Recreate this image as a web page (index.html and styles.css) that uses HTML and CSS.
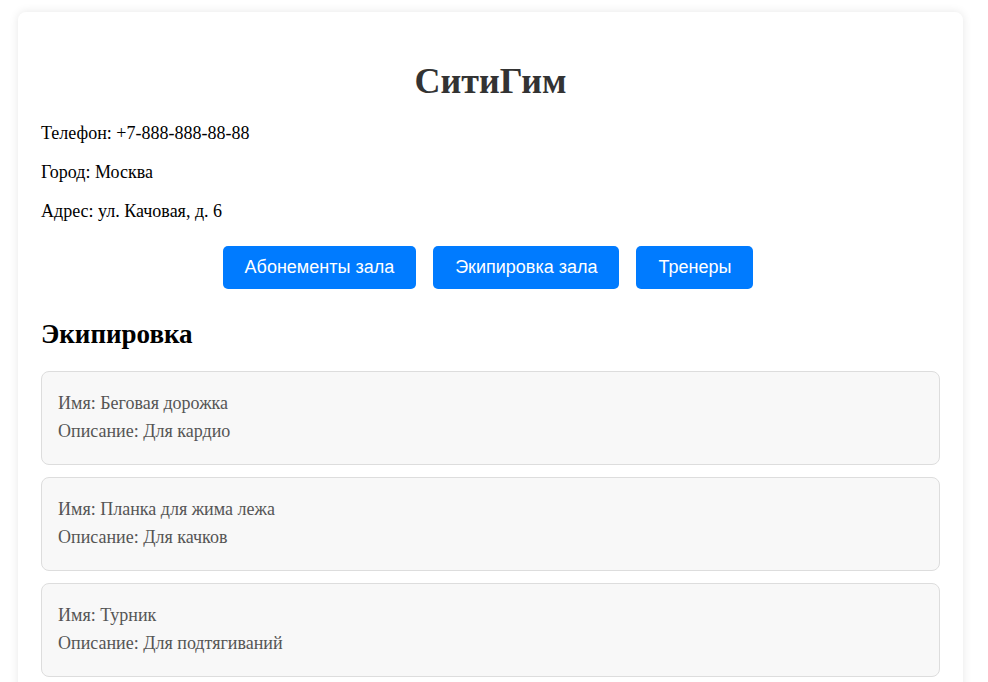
FILE: index.html
```html
<!DOCTYPE html>
<html lang="ru">
<head>
<meta charset="utf-8">
<title>СитиГим</title>
<link rel="stylesheet" href="styles.css">
</head>
<body>
<div class="card">
  <h1 class="title">СитиГим</h1>
  <p class="info">Телефон: +7-888-888-88-88</p>
  <p class="info">Город: Москва</p>
  <p class="info">Адрес: ул. Качовая, д. 6</p>
  <div class="nav">
    <button class="btn">Абонементы зала</button>
    <button class="btn">Экипировка зала</button>
    <button class="btn">Тренеры</button>
  </div>
  <h2 class="section">Экипировка</h2>
  <div class="list">
    <div class="item">
      <div class="line">Имя: Беговая дорожка</div>
      <div class="line">Описание: Для кардио</div>
    </div>
    <div class="item">
      <div class="line">Имя: Планка для жима лежа</div>
      <div class="line">Описание: Для качков</div>
    </div>
    <div class="item">
      <div class="line">Имя: Турник</div>
      <div class="line">Описание: Для подтягиваний</div>
    </div>
  </div>
</div>
</body>
</html>
```
FILE: styles.css
```css
html, body {
  margin: 0;
  padding: 0;
  background: #ffffff;
}
body {
  font-family: "Liberation Serif", "Times New Roman", serif;
  font-size: 18px;
  color: #000;
  padding: 12px 0 20px 18px;
}
.card {
  width: 945px;
  box-sizing: border-box;
  background: #fff;
  border-radius: 8px;
  box-shadow: 0 0 10px rgba(0, 0, 0, 0.1);
  padding: 30px 23px 20px;
}
.title {
  margin: 19px 0 20px;
  font-size: 36px;
  line-height: 40px;
  font-weight: bold;
  text-align: center;
  color: #333;
}
.info {
  margin: 15px 0;
  line-height: 24px;
}
.nav {
  display: flex;
  justify-content: center;
  gap: 17px;
  margin: 23px 5px 0 0;
}
.btn {
  font-family: "Liberation Sans", Arial, sans-serif;
  font-size: 18px;
  line-height: 21px;
  color: #fff;
  background: #007bff;
  border: none;
  border-radius: 5px;
  padding: 11px 22px;
  cursor: pointer;
}
.section {
  margin: 30px 0 22px;
  font-size: 27px;
  line-height: 30px;
  font-weight: bold;
}
.list {
  display: flex;
  flex-direction: column;
  gap: 12px;
}
.item {
  background: #f8f8f8;
  border: 1px solid #ddd;
  border-radius: 8px;
  padding: 18px 16px 19px;
  color: #555;
}
.line {
  line-height: 27.5px;
}
```
